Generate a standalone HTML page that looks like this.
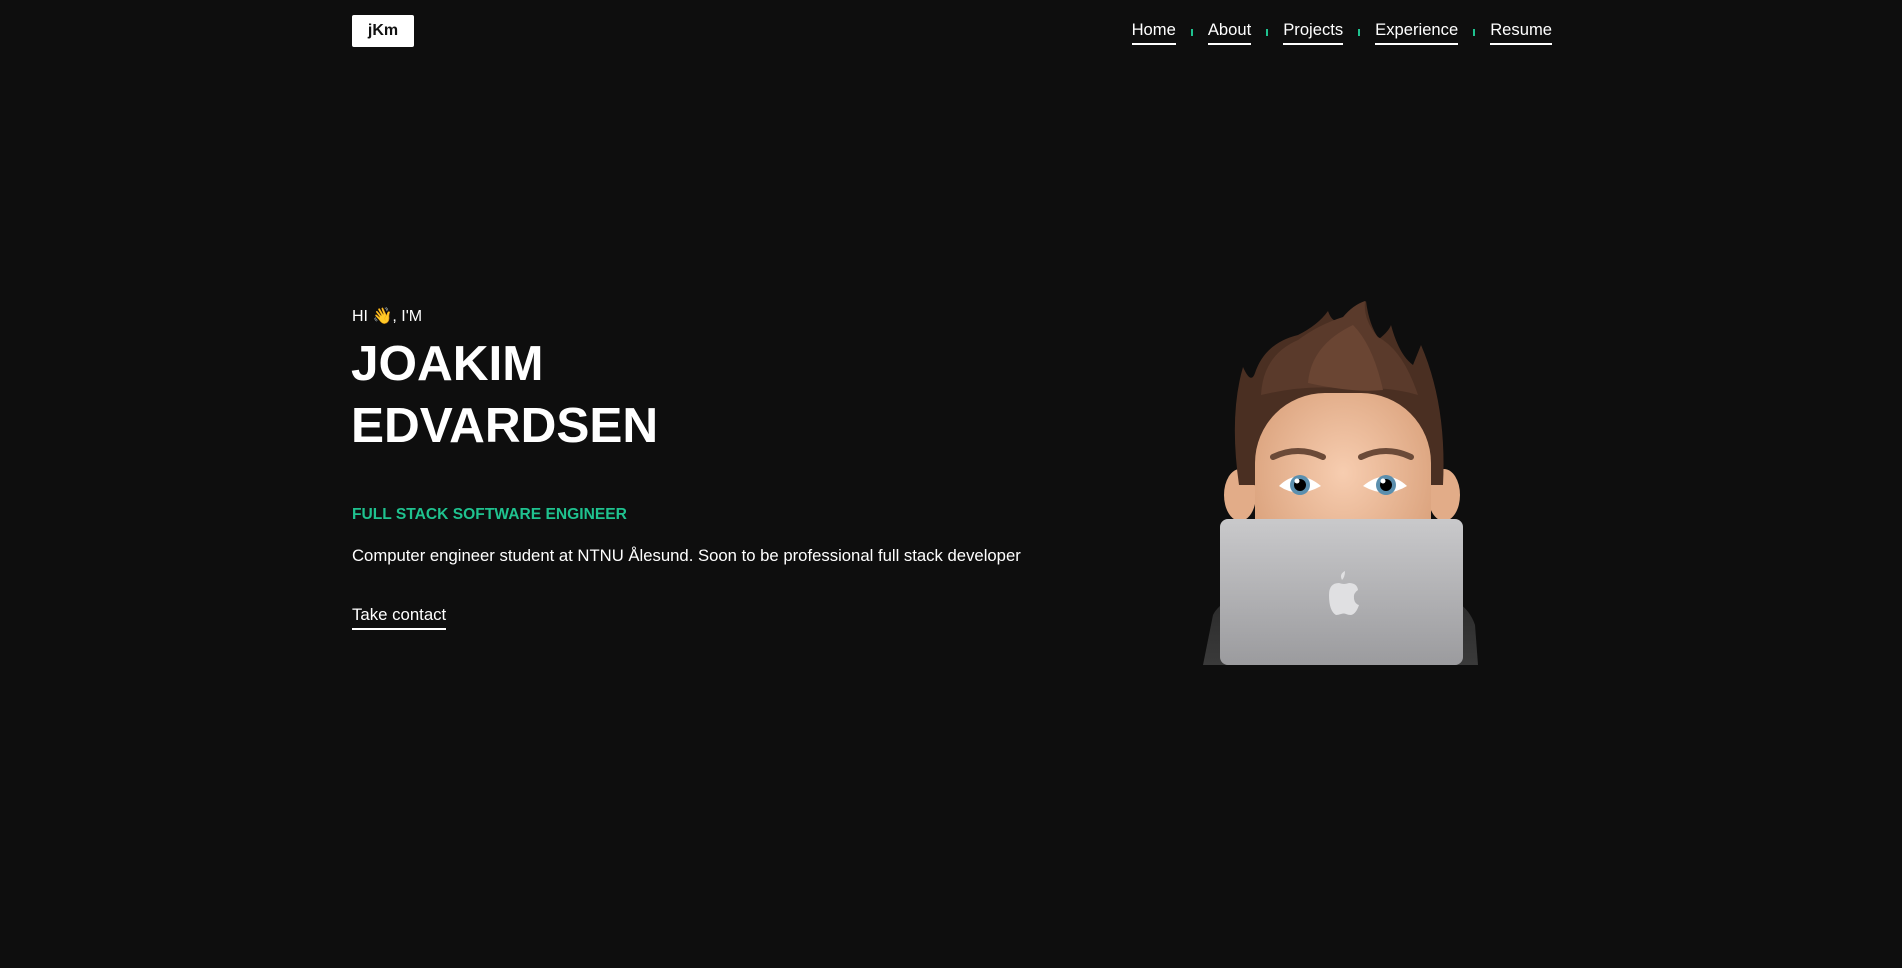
<!DOCTYPE html>
<html><head><meta charset="utf-8"><style>
html,body{margin:0;padding:0;background:#0e0e0e;width:1902px;height:968px;overflow:hidden;font-family:"Liberation Sans",sans-serif;color:#fff}
.logo{position:absolute;left:352px;top:15px;width:62px;height:32px;background:#fff;color:#111;font-weight:bold;font-size:16px;display:flex;align-items:center;justify-content:center;border-radius:2px}
.nav{position:absolute;top:20px;right:350px;display:flex;align-items:center;font-size:16.6px}
.nav a{color:#fff;text-decoration:none;border-bottom:2px solid #fff;padding-bottom:3px;line-height:20px}
.nav .sep{width:2px;height:7px;background:#1fc28f;margin:0 15px}
.hi{position:absolute;left:352px;top:306px;font-size:16px}
h1{position:absolute;left:351px;top:333px;margin:0;font-size:49.5px;line-height:62px;font-weight:bold}
.role{position:absolute;left:352px;top:506px;font-size:15.6px;font-weight:bold;color:#1fc28f}
.desc{position:absolute;left:352px;top:546px;font-size:16.7px}
.cta{position:absolute;left:352px;top:605px;font-size:16.8px;border-bottom:2px solid #fff;padding-bottom:3px}
svg{position:absolute;left:1203px;top:295px}
</style></head><body>
<div class="logo">jKm</div>
<div class="nav"><a>Home</a><span class="sep"></span><a>About</a><span class="sep"></span><a>Projects</a><span class="sep"></span><a>Experience</a><span class="sep"></span><a>Resume</a></div>
<div class="hi">HI 👋, I'M</div>
<h1>JOAKIM<br>EDVARDSEN</h1>
<div class="role">FULL STACK SOFTWARE ENGINEER</div>
<div class="desc">Computer engineer student at NTNU Ålesund. Soon to be professional full stack developer</div>
<div class="cta">Take contact</div>
<svg width="280" height="375" viewBox="0 0 280 375">
<defs>
<linearGradient id="lp" x1="0" y1="0" x2="0" y2="1"><stop offset="0" stop-color="#c9c9cb"/><stop offset="1" stop-color="#9b9b9e"/></linearGradient>
<radialGradient id="fc" cx="0.5" cy="0.4" r="0.6"><stop offset="0" stop-color="#f7cdb0"/><stop offset="1" stop-color="#d9a07a"/></radialGradient>
<linearGradient id="sh" x1="0" y1="0" x2="0" y2="1"><stop offset="0" stop-color="#2a2a2a"/><stop offset="1" stop-color="#3a3a3a"/></linearGradient>
</defs>
<path d="M10 320 Q20 300 60 298 L220 298 Q262 300 272 330 L275 370 L0 370 Z" fill="url(#sh)"/>
<ellipse cx="37" cy="200" rx="16" ry="26" fill="#e2ac88"/>
<ellipse cx="241" cy="200" rx="16" ry="26" fill="#e2ac88"/>
<path d="M36 190 Q26 120 40 72 Q48 90 52 78 Q62 48 95 40 Q115 30 125 16 Q130 30 138 24 Q150 14 163 6 Q166 30 176 44 Q186 36 188 30 Q196 60 210 70 Q214 60 218 50 Q244 110 240 190 Z" fill="#4a2f22"/>
<rect x="52" y="98" width="176" height="200" rx="70" fill="url(#fc)"/>
<path d="M58 100 Q60 60 95 45 Q115 30 140 22 Q150 10 162 6 Q160 25 175 42 Q200 55 215 100 Q180 90 150 95 Q110 88 58 100 Z" fill="#5a3a2b"/>
<path d="M105 88 Q108 50 150 30 Q170 50 180 95 Q150 98 105 88 Z" fill="#6a4533"/>
<path d="M70 162 Q95 150 120 162" stroke="#6b4a38" stroke-width="6" fill="none" stroke-linecap="round"/>
<path d="M158 162 Q183 150 208 162" stroke="#6b4a38" stroke-width="6" fill="none" stroke-linecap="round"/>
<path d="M76 191 Q95 172 118 191 Q95 204 76 191 Z" fill="#fff"/>
<path d="M160 191 Q183 172 204 191 Q183 204 160 191 Z" fill="#fff"/>
<circle cx="97" cy="190" r="10" fill="#5b8fae"/><circle cx="97" cy="190" r="6" fill="#000"/><circle cx="94" cy="186" r="2.5" fill="#fff"/>
<circle cx="183" cy="190" r="10" fill="#5b8fae"/><circle cx="183" cy="190" r="6" fill="#000"/><circle cx="180" cy="186" r="2.5" fill="#fff"/>
<rect x="17" y="224" width="243" height="146" rx="8" fill="url(#lp)"/>
<path d="M139 285 q-3-6 3-9 q0 6-3 9z M126 300 q0-12 10-12 q3 1 5 1 q2 0 5-1 q8 0 9 7 q-5 3-4 9 q1 5 5 6 q-3 9-8 10 q-3 0-5-1 q-2-1-5 0 q-3 1-5 1 q-7-4-7-20z" fill="#e0e0e2"/>
</svg>
</body></html>
